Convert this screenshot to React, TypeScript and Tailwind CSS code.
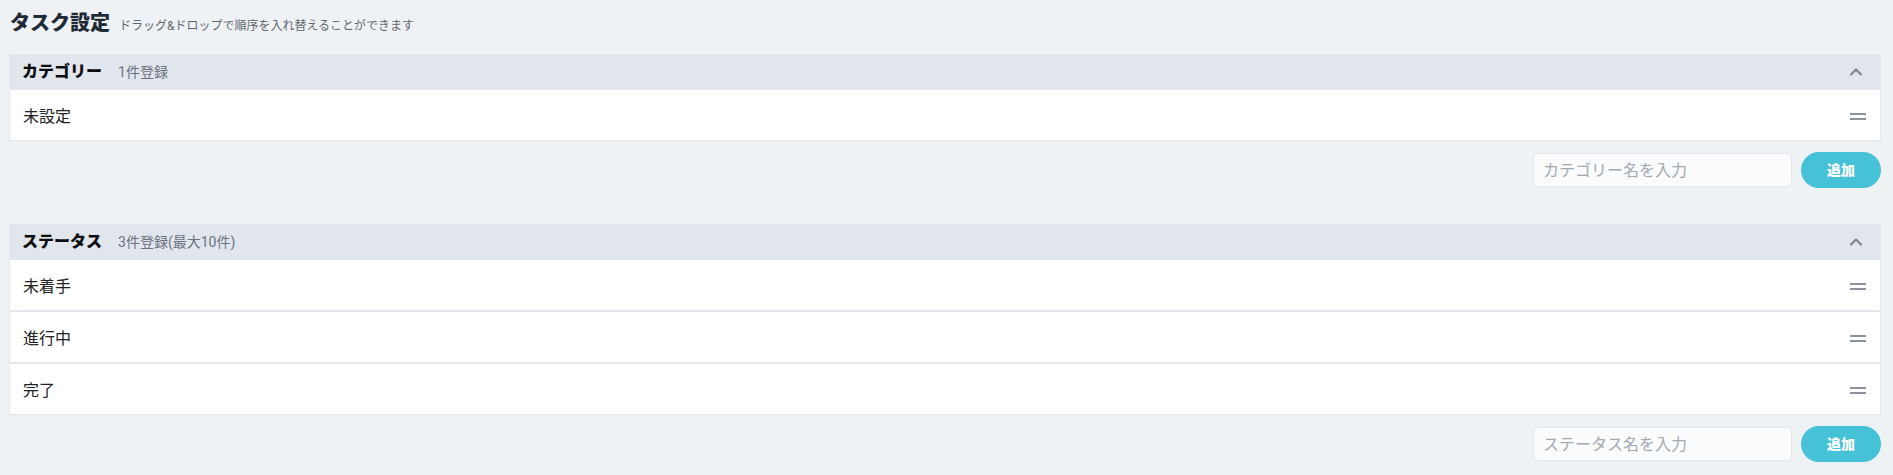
import { useState } from 'react'

interface Section {
  key: string
  title: string
  count: string
  placeholder: string
  items: string[]
}

const sections: Section[] = [
  {
    key: 'category',
    title: 'カテゴリー',
    count: '1件登録',
    placeholder: 'カテゴリー名を入力',
    items: ['未設定'],
  },
  {
    key: 'status',
    title: 'ステータス',
    count: '3件登録(最大10件)',
    placeholder: 'ステータス名を入力',
    items: ['未着手', '進行中', '完了'],
  },
]

function ChevronUp() {
  return (
    <svg width="16" height="16" viewBox="0 0 16 16" fill="none">
      <path d="M3 10.5 L8 5.5 L13 10.5" stroke="#7d8590" strokeWidth="2.2" strokeLinecap="round" strokeLinejoin="round" />
    </svg>
  )
}

function DragHandle() {
  return (
    <div className="flex flex-col gap-[3px]">
      <span className="block w-[16px] h-[2px] bg-[#8c929a]" />
      <span className="block w-[16px] h-[2px] bg-[#8c929a]" />
    </div>
  )
}

function SectionCard({ section }: { section: Section }) {
  const [value, setValue] = useState('')

  return (
    <div>
      <div className="bg-white border border-[#e3e7ec] border-t-0">
        <div className="h-[36px] bg-[#e1e6ed] flex items-center justify-between pl-[12px] pr-[16px]">
          <div className="flex items-center">
            <span className="text-[16px] font-black text-[#0d0d0d]">{section.title}</span>
            <span className="ml-[16px] text-[14px] text-[#6b7280]">{section.count}</span>
          </div>
          <ChevronUp />
        </div>
        {section.items.map((item, i) => (
          <div
            key={item}
            className={
              i === section.items.length - 1
                ? 'h-[50px] flex items-center justify-between pl-[13px] pr-[14px] pt-[3px]'
                : 'h-[52px] flex items-center justify-between pl-[13px] pr-[14px] pt-[3px] border-b-2 border-[#e3e6ea]'
            }
          >
            <span className="text-[16px] text-[#222]">{item}</span>
            <DragHandle />
          </div>
        ))}
      </div>

      <div className="flex items-center justify-end gap-[9px] mt-[11px]">
        <input
          value={value}
          onChange={(e) => setValue(e.target.value)}
          placeholder={section.placeholder}
          className="w-[259px] h-[34px] rounded-[4px] border border-[#e2e7ed] bg-[#f9fbfc] px-[9px] text-[16px] text-[#333] placeholder:text-[#a3a9b1] outline-none"
        />
        <button className="w-[80px] h-[36px] rounded-full bg-[#45c2d7] text-white text-[14px] font-black">
          追加
        </button>
      </div>
    </div>
  )
}

export default function App() {
  return (
    <div
      className="min-h-screen bg-[#eff2f5] pl-[9px] pr-[12px] pt-[8px] pb-[14px]"
      style={{ fontFamily: 'Roboto, "Noto Sans CJK JP", sans-serif' }}
    >
      <div className="flex items-baseline h-[30px] mb-[16px]">
        <h1 className="text-[20px] font-black text-[#1f2a37] leading-[30px] pl-[1px]">タスク設定</h1>
        <span className="ml-[9px] text-[12px] text-[#5f6670]">ドラッグ&ドロップで順序を入れ替えることができます</span>
      </div>

      <div className="flex flex-col gap-[36px]">
        {sections.map((s) => (
          <SectionCard key={s.key} section={s} />
        ))}
      </div>
    </div>
  )
}
